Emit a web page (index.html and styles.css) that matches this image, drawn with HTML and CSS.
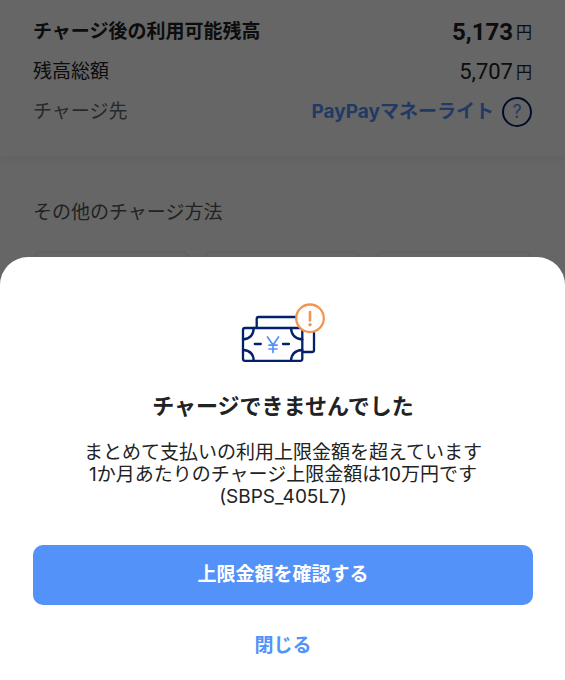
FILE: index.html
```html
<!DOCTYPE html>
<html lang="ja">
<head>
<meta charset="utf-8">
<meta name="viewport" content="width=device-width, initial-scale=1">
<title>チャージ</title>
<link rel="stylesheet" href="styles.css">
</head>
<body>
<main class="page">
  <dl class="summary">
    <div class="row row-strong">
      <dt>チャージ後の利用可能残高</dt>
      <dd><span class="amount">5,173</span><span class="unit">円</span></dd>
    </div>
    <div class="row">
      <dt>残高総額</dt>
      <dd><span class="amount">5,707</span><span class="unit">円</span></dd>
    </div>
    <div class="row row-target">
      <dt>チャージ先</dt>
      <dd>
        <a class="target" href="#">PayPayマネーライト</a>
        <button class="help" type="button">?</button>
      </dd>
    </div>
  </dl>
  <section class="methods">
    <h2 class="methods-title">その他のチャージ方法</h2>
    <div class="cards">
      <div class="card"></div>
      <div class="card"></div>
      <div class="card"></div>
    </div>
  </section>
</main>
<div class="scrim">
  <section class="sheet" role="alertdialog" aria-labelledby="sheet-title">
    <svg class="sheet-icon" width="85" height="62" viewBox="0 0 85 62" fill="none" stroke-width="2.3" stroke-linecap="round" aria-hidden="true">
      <g stroke="#03206b">
        <path d="M15.7 24V16q0-2 2-2H56M73 30V47q0 2-2 2H62"/>
        <rect x="2" y="25" width="59.3" height="32.8" rx="2"/>
        <path d="M12.7 25Q12.5 35.5 2 36.5M50 25Q50.5 35.5 61.3 36.5M2 47Q12.5 47.5 12.7 57.8M61.3 47Q50.5 47.5 50 57.8M13.8 41h6M42 41h6"/>
      </g>
      <path d="M26.5 34l5.5 8 5.5-8M32 42v7.5M28 42.2h8M28 46h8" stroke="#5392f9" stroke-width="1.7"/>
      <circle cx="69" cy="15.3" r="13.8" fill="#fff" stroke="#f49454"/>
      <path d="M69 9v8.5" stroke="#f49454" stroke-width="2.6"/>
      <circle cx="69" cy="21.8" r="1.7" fill="#f49454"/>
    </svg>
    <h1 class="sheet-title" id="sheet-title">チャージできませんでした</h1>
    <p class="message">まとめて支払いの利用上限金額を超えています<br>1か月あたりのチャージ上限金額は10万円です<br>(SBPS_405L7)</p>
    <button class="primary" type="button">上限金額を確認する</button>
    <button class="close" type="button">閉じる</button>
  </section>
</div>
</body>
</html>
```
FILE: styles.css
```css
* {
  box-sizing: border-box;
}

body {
  margin: 0;
  background: #fff;
  color: #222;
  font-family: Inter, "Noto Sans CJK JP", sans-serif;
  font-size: 19px;
  line-height: 22px;
}

button {
  font: inherit;
  cursor: pointer;
}

.summary {
  margin: 0;
  padding: 12px 33px 24px;
  box-shadow: 0 2px 10px rgba(0, 0, 0, 0.08);
}

.row {
  display: flex;
  align-items: center;
  justify-content: space-between;
  height: 40px;
}

.row dd {
  display: flex;
  align-items: center;
  margin: 0;
  gap: 3px;
}

.row-strong dt {
  font-weight: 700;
}

.amount {
  font-family: Roboto, sans-serif;
  font-size: 22px;
}

.row-strong .amount {
  font-size: 24px;
  font-weight: 700;
}

.unit {
  font-size: 16px;
}

.row-target dt {
  color: #666;
}

.row-target dd {
  gap: 8px;
}

.target {
  color: #5392f9;
  font-size: 19px;
  font-weight: 700;
  text-decoration: none;
}

.help {
  width: 30px;
  height: 30px;
  padding: 0;
  border: 2px solid #03206b;
  border-radius: 50%;
  background: none;
  color: #5392f9;
  font-size: 18px;
}

.methods {
  padding: 46px 33px 0;
}

.methods-title {
  margin: 0 0 27px;
  color: #555;
  font-size: 19px;
  font-weight: 400;
}

.cards {
  display: grid;
  grid-template-columns: repeat(3, 1fr);
  gap: 14px;
}

.card {
  height: 120px;
  border: 2px solid #f2f2f2;
  border-radius: 8px;
}

.scrim {
  position: fixed;
  inset: 0;
  display: flex;
  flex-direction: column;
  justify-content: flex-end;
  background: rgba(0, 0, 0, 0.6);
}

.sheet {
  display: flex;
  flex-direction: column;
  align-items: center;
  padding: 46px 32px 19px 33px;
  border-radius: 28px 28px 0 0;
  background: #fff;
}

.sheet-title {
  margin: 25px 0 20px;
  font-size: 22px;
  line-height: 32px;
}

.message {
  margin: 0 0 37px;
  text-align: center;
}

.primary {
  width: 100%;
  height: 60px;
  border: 0;
  border-radius: 10px;
  background: #5392f9;
  color: #fff;
  font-weight: 700;
}

.close {
  height: 30px;
  margin-top: 26px;
  border: 0;
  background: none;
  color: #5392f9;
  font-weight: 700;
}
```
